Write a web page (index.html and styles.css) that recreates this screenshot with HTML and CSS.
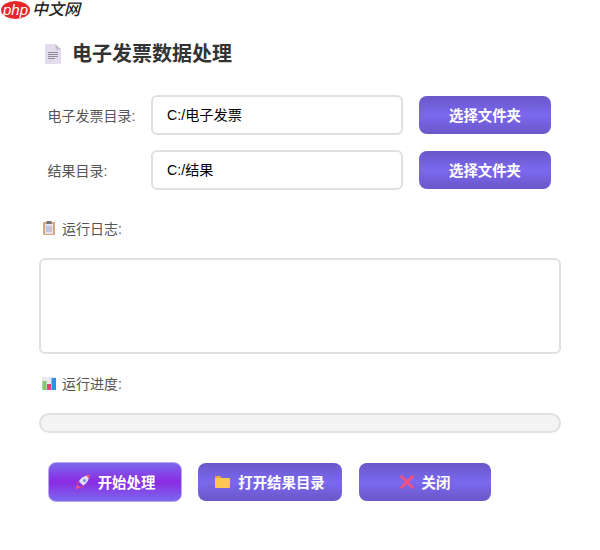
FILE: index.html
```html
<!DOCTYPE html>
<html>
<head>
    <title>电子发票数据处理</title>
    <meta name="viewport" content="width=device-width, initial-scale=1">
    <link rel="stylesheet" href="styles.css">
</head>
<body>
    <div class="watermark">
        <span class="wm-php">php</span>
        <span class="wm-name">中文网</span>
    </div>

    <div class="container">
        <h1 class="title">
            <svg class="title-icon" width="16" height="20" viewBox="0 0 16 20">
                <path d="M0 0h10.500l5.500 5.500v14.500h-16z" fill="#e3dcef"/>
                <path d="M10.500 0l5.500 5.500h-5.500z" fill="#c4bccb"/>
                <path d="M3 8.500h10M3 10.500h10M3 12.500h10M3 14.500h7" stroke="#8f8a9a" stroke-width="1"/>
            </svg>
            电子发票数据处理
        </h1>

        <div class="dir-row">
            <label class="dir-label">电子发票目录:</label>
            <div class="dir-input">C:/电子发票</div>
            <button class="btn btn-pick">选择文件夹</button>
        </div>
        <div class="dir-row">
            <label class="dir-label">结果目录:</label>
            <div class="dir-input">C:/结果</div>
            <button class="btn btn-pick">选择文件夹</button>
        </div>

        <div class="section-label log-label">
            <svg width="12" height="14" viewBox="0 0 12 14">
                <rect x="0" y="1" width="12" height="13" rx="1" fill="#d9a77e"/>
                <rect x="2" y="3" width="8" height="10" fill="#e6e0ee"/>
                <rect x="3.500" y="0" width="5" height="3" fill="#77727c"/>
                <path d="M3 6h6M3 8h6M3 10h6" stroke="#a9a3b4" stroke-width="1"/>
            </svg>
            运行日志:
        </div>
        <div class="log-box"></div>

        <div class="section-label progress-label">
            <svg width="14" height="13" viewBox="0 0 14 13">
                <rect x="0" y="0" width="14" height="13" fill="#e9e6ee"/>
                <rect x="0.500" y="4" width="4" height="9" fill="#7ccb6f"/>
                <rect x="5" y="7" width="4" height="6" fill="#e8407f"/>
                <rect x="9.500" y="1" width="4.500" height="12" fill="#2f8fe0"/>
            </svg>
            运行进度:
        </div>
        <div class="progress-bar"></div>

        <div class="actions">
            <button class="btn btn-start">
                <svg width="15" height="15" viewBox="0 0 15 15">
                    <path d="M2 9.500L0.500 14.500l5-2z" fill="#f0508a"/>
                    <path d="M4 6.500c2-4 6-6 10.500-6.500-.5 4.500-2.500 8.500-6.500 10.500z" fill="#e6dcf2"/>
                    <path d="M11 0.500l3.500-.5-.5 3.500z" fill="#f04a5e"/>
                    <circle cx="9.500" cy="5.500" r="1.500" fill="#5b9bd8"/>
                    <path d="M4 6.500l-3 1 1.500 2zM8 10.500l-1 3-2-1.500z" fill="#e83a6a"/>
                </svg>
                开始处理
            </button>
            <button class="btn btn-open">
                <svg width="15" height="12" viewBox="0 0 15 12">
                    <path d="M0 1a1 1 0 0 1 1-1h4l1.500 2h-6.500z" fill="#e8a83c"/>
                    <rect x="0" y="2" width="15" height="10" rx="1" fill="#fdc64e"/>
                </svg>
                打开结果目录
            </button>
            <button class="btn btn-close">
                <svg width="14" height="14" viewBox="0 0 14 14">
                    <path d="M1.500 1.500l11 11M12.500 1.500l-11 11" stroke="#f4517f" stroke-width="2.600" stroke-linecap="round"/>
                </svg>
                关闭
            </button>
        </div>
    </div>
</body>
</html>
```
FILE: styles.css
```css
body {
    font-family: "Liberation Sans", "Noto Sans CJK SC", sans-serif;
    margin: 0;
    background: white;
    color: #333;
}
.watermark {
    position: absolute;
    top: 1px;
    left: 1px;
    display: flex;
    align-items: center;
    gap: 2px;
}
.wm-php {
    background: #e8262a;
    color: white;
    font-style: italic;
    font-size: 15px;
    line-height: 18px;
    width: 29px;
    text-align: center;
    border-radius: 50%;
}
.wm-name {
    font-size: 16px;
    line-height: 18px;
    font-style: italic;
    font-weight: 500;
    color: #222;
}
.container {
    padding: 42px 39px 0;
    width: 522px;
}
.title {
    display: flex;
    align-items: center;
    gap: 12px;
    margin: 0 0 29px 5px;
    height: 24px;
    font-size: 20px;
    line-height: 24px;
    font-weight: bold;
    color: #333;
}
.title-icon {
    margin-left: 1px;
    margin-right: -1px;
}
.dir-row {
    display: flex;
    align-items: center;
    height: 40px;
    margin-bottom: 15px;
}
.dir-label {
    width: 103px;
    padding-left: 8.5px;
    box-sizing: border-box;
    margin-right: 9px;
    margin-bottom: 1px;
    font-size: 14px;
    color: #555;
}
.dir-input {
    width: 252px;
    height: 40px;
    box-sizing: border-box;
    border: 2px solid #e0e0e0;
    border-radius: 6px;
    padding: 0 14px;
    font-size: 14.2px;
    line-height: 36px;
    color: #000;
}
.btn {
    display: flex;
    align-items: center;
    justify-content: center;
    gap: 8px;
    border: none;
    border-radius: 8px;
    height: 38px;
    padding: 0 0 2px;
    font-family: inherit;
    font-size: 14.4px;
    font-weight: bold;
    color: white;
    background: linear-gradient(to bottom, #6a57c8 0%, #7b68ee 50%, #6a57c8 100%);
}
.btn svg {
    margin-top: 2px;
}
.btn-pick {
    width: 132px;
    margin-left: 16px;
}
.section-label {
    display: flex;
    align-items: center;
    gap: 7px;
    padding: 0 0 2px 4px;
    height: 20px;
    box-sizing: border-box;
    font-size: 14px;
    color: #555;
}
.log-label {
    margin-top: 29px;
}
.log-box {
    height: 96px;
    box-sizing: border-box;
    margin-top: 19px;
    border: 2px solid #e0e0e0;
    border-radius: 6px;
    background: white;
}
.progress-label {
    margin-top: 20px;
    padding-left: 3px;
    gap: 6px;
}
.progress-bar {
    height: 20px;
    box-sizing: border-box;
    margin-top: 19px;
    border: 2px solid #e0e0e0;
    border-radius: 10px;
    background: #f4f4f4;
}
.actions {
    display: flex;
    align-items: center;
    gap: 16px;
    margin-top: 29px;
    padding-left: 9px;
}
.btn-start {
    width: 134px;
    height: 40px;
    box-sizing: border-box;
    border: 1px solid #b9a8ee;
    background: linear-gradient(to bottom, #7b68ee 0%, #8a2be2 50%, #7b68ee 100%);
}
.btn-open {
    width: 144px;
}
.btn-close {
    width: 132px;
    margin-left: 1px;
}
```
